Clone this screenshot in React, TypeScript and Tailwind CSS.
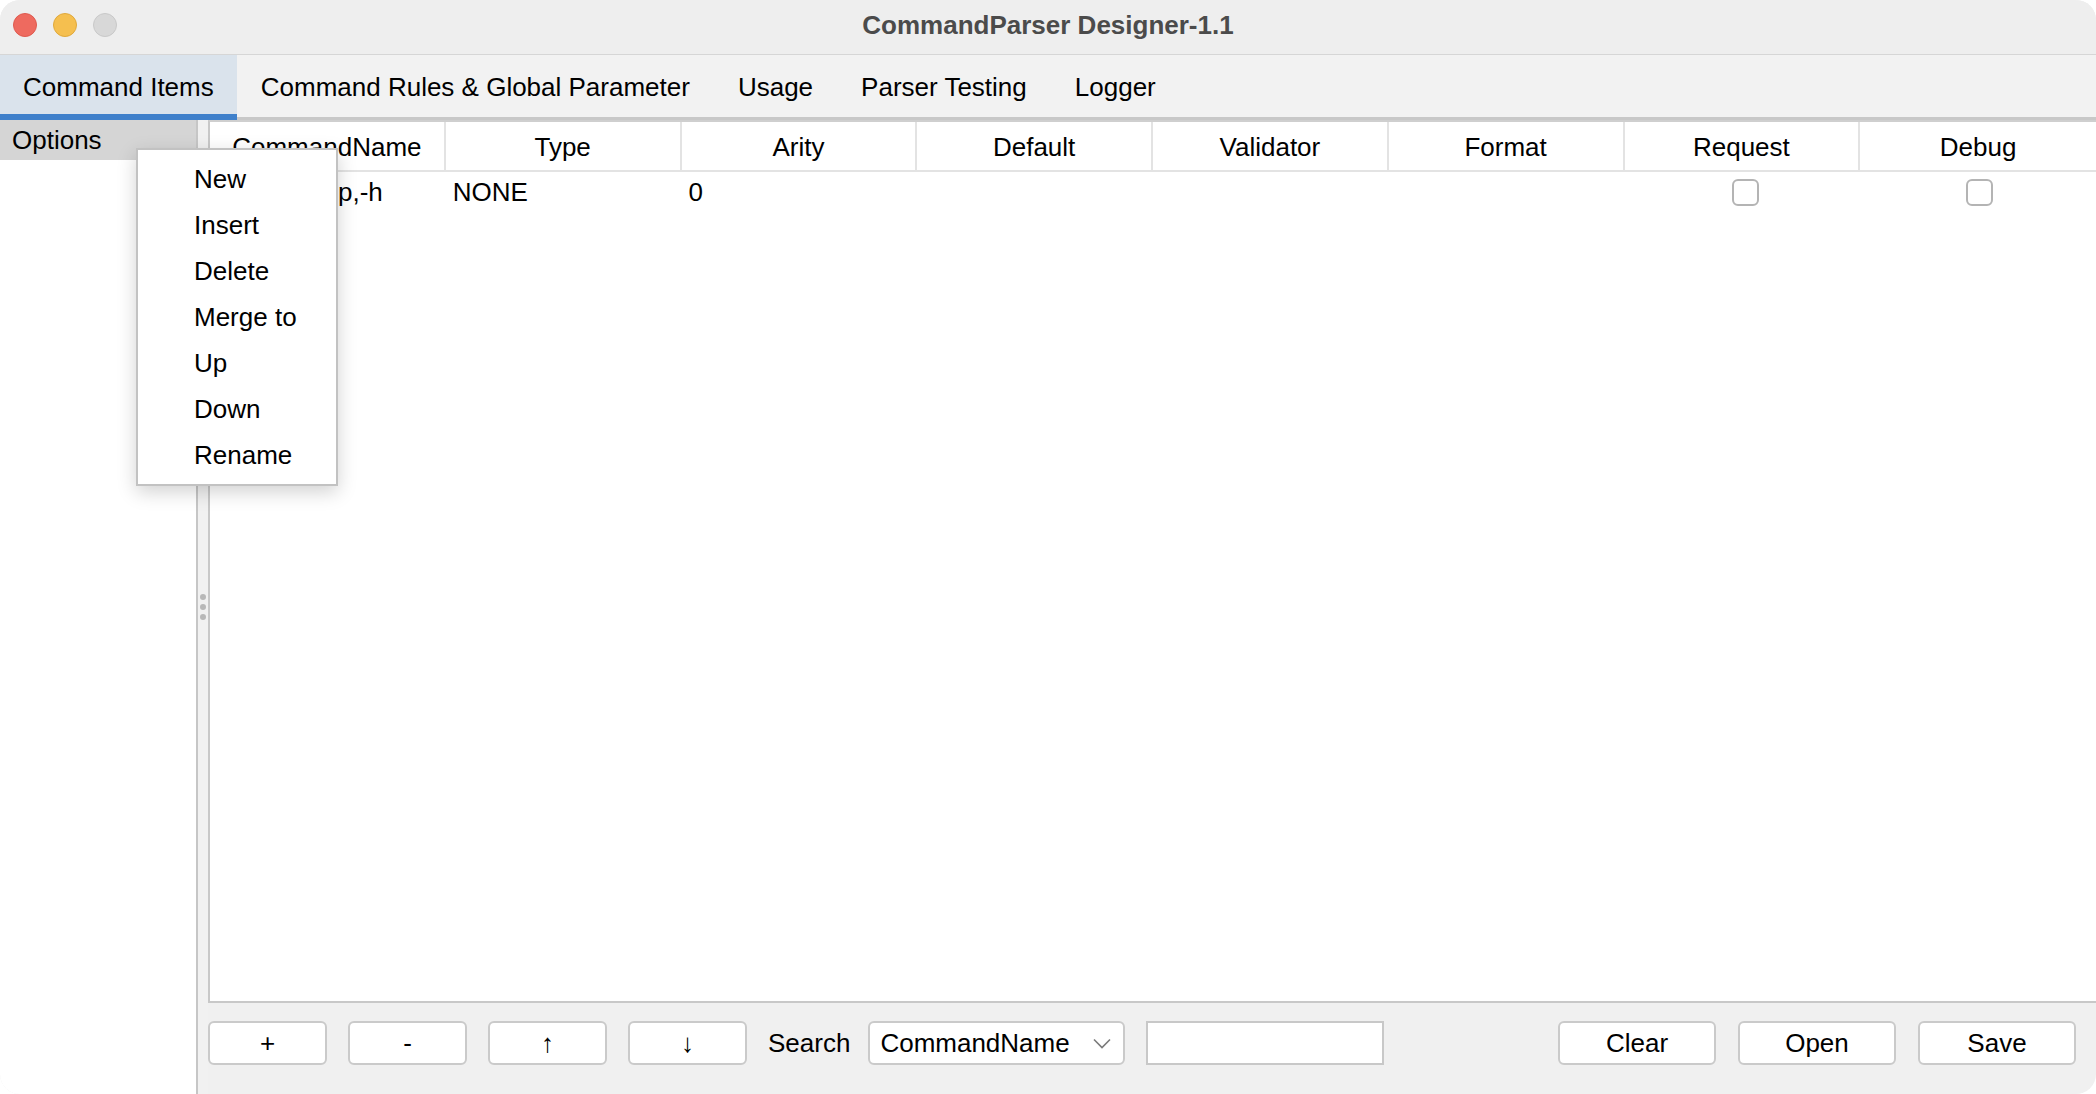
import React from 'react';

const columns = ['CommandName', 'Type', 'Arity', 'Default', 'Validator', 'Format', 'Request', 'Debug'];
const tabs = ['Command Items', 'Command Rules & Global Parameter', 'Usage', 'Parser Testing', 'Logger'];
const menuItems = ['New', 'Insert', 'Delete', 'Merge to', 'Up', 'Down', 'Rename'];

const Checkbox: React.FC = () => (
  <div className="h-[27px] w-[27px] rounded-[6px] border-2 border-[#b4b4b4] bg-white" />
);

const Button: React.FC<{ label: string; wide?: boolean }> = ({ label, wide }) => (
  <button
    className={`flex h-[44px] items-center justify-center rounded-[6px] border-2 border-[#cacaca] bg-white ${
      wide ? 'w-[158px]' : 'w-[119px]'
    }`}
  >
    {label}
  </button>
);

const App: React.FC = () => {
  return (
    <div className="h-[1094px] w-[2096px] overflow-hidden bg-white">
      <div className="flex h-full w-full flex-col overflow-hidden rounded-[20px] bg-[#f0f0f0] font-['Liberation_Sans',Arial,Helvetica,sans-serif] text-[26px] leading-none text-black">
        {/* title bar */}
        <div className="grid h-[55px] shrink-0 grid-cols-[1fr_auto_1fr] items-center border-b border-[#d6d6d6] bg-[#eeeeee] pb-[4px]">
          <div className="flex items-center gap-[16px] pl-[13px]">
            <span className="h-[24px] w-[24px] rounded-full border border-[#de5a4f] bg-[#ee6a5f]" />
            <span className="h-[24px] w-[24px] rounded-full border border-[#dfa83c] bg-[#f5bf4f]" />
            <span className="h-[24px] w-[24px] rounded-full border border-[#c8c8c8] bg-[#d8d8d8]" />
          </div>
          <div className="font-bold text-[#4b4b4b]">CommandParser Designer-1.1</div>
          <div />
        </div>

        {/* tabs */}
        <div className="flex h-[65px] shrink-0 border-b-[3px] border-[#c8c8c8] bg-[#f2f2f2]">
          {tabs.map((t, i) =>
            i === 0 ? (
              <div
                key={t}
                className="flex h-[65px] items-center border-b-[6px] border-[#3e80cb] bg-[#dae3ec] px-[23px] pt-[4px]"
              >
                {t}
              </div>
            ) : (
              <div key={t} className="flex h-full items-center px-[24px] pt-[2px]">
                {t}
              </div>
            )
          )}
        </div>

        {/* content */}
        <div className="relative flex min-h-0 flex-1">
          {/* left panel */}
          <div className="flex w-[196px] shrink-0 flex-col bg-white">
            <div className="flex h-[40px] items-center bg-[#d5d5d5] pl-[12px]">Options</div>
          </div>

          {/* splitter */}
          <div className="flex w-[12px] shrink-0 flex-col items-center justify-center gap-[4px] border-l-2 border-[#c6c6c6] bg-[#f1f1f1]">
            <span className="h-[6px] w-[6px] rounded-full bg-[#b8b8b8]" />
            <span className="h-[6px] w-[6px] rounded-full bg-[#b8b8b8]" />
            <span className="h-[6px] w-[6px] rounded-full bg-[#b8b8b8]" />
          </div>

          {/* main */}
          <div className="flex min-w-0 flex-1 flex-col">
            <div className="flex-1 border-b-2 border-l-2 border-t-2 border-[#c8c8c8] border-t-[#cfcfcf] bg-white">
              <div className="grid h-[50px] grid-cols-8 border-b-2 border-[#e3e3e3]">
                {columns.map((c, i) => (
                  <div
                    key={c}
                    className={`flex items-center justify-center pt-[2px] ${i < columns.length - 1 ? 'border-r-2 border-[#e3e3e3]' : ''}`}
                  >
                    {c}
                  </div>
                ))}
              </div>
              <div className="grid h-[40px] grid-cols-8 items-center">
                <div className="pl-[76px]">--help,-h</div>
                <div className="pl-[7px]">NONE</div>
                <div className="pl-[7px]">0</div>
                <div />
                <div />
                <div />
                <div className="flex justify-center pl-[6px]">
                  <Checkbox />
                </div>
                <div className="flex justify-center pl-[2px]">
                  <Checkbox />
                </div>
              </div>
            </div>

            {/* bottom bar */}
            <div className="flex h-[91px] shrink-0 items-start pt-[18px] pr-[20px]">
              <div className="flex items-center gap-[21px]">
                <Button label="+" />
                <Button label="-" />
                <Button label="↑" />
                <Button label="↓" />
                <span className="-mr-[3px]">Search</span>
                <div className="flex h-[44px] w-[257px] items-center justify-between rounded-[6px] border-2 border-[#cacaca] bg-white pl-[10px] pr-[12px]">
                  <span>CommandName</span>
                  <svg width="18" height="11" viewBox="0 0 18 11" fill="none">
                    <path d="M1 1.5l8 8 8-8" stroke="#7a7a7a" strokeWidth="1.6" />
                  </svg>
                </div>
                <div className="h-[44px] w-[238px] border-2 border-[#c8c8c8] bg-white" />
              </div>
              <div className="flex-1" />
              <div className="flex items-center gap-[22px]">
                <Button label="Clear" wide />
                <Button label="Open" wide />
                <Button label="Save" wide />
              </div>
            </div>
          </div>

          {/* popup menu */}
          <div className="absolute left-[136px] top-[28px] w-[202px] border-2 border-[#c2c2c2] bg-white py-[6px] shadow-[0_6px_18px_rgba(0,0,0,0.18)]">
            {menuItems.map((m) => (
              <div key={m} className="flex h-[46px] items-center pl-[56px]">
                {m}
              </div>
            ))}
          </div>
        </div>
      </div>
    </div>
  );
};

export default App;
